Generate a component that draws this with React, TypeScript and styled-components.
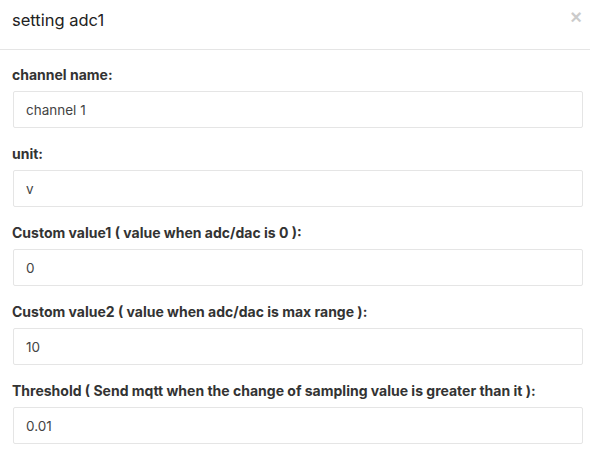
import styled, { createGlobalStyle } from "styled-components";

const GlobalStyle = createGlobalStyle`
  html, body {
    margin: 0;
    padding: 0;
    background: #ffffff;
  }
  body {
    font-family: Inter, "Helvetica Neue", Arial, sans-serif;
    color: #333333;
  }
`;

const Modal = styled.div`
  width: 590px;
  height: 470px;
  background: #fff;
  overflow: hidden;
`;

const Header = styled.div`
  display: flex;
  align-items: center;
  justify-content: space-between;
  height: 49px;
  padding: 0 8px 0 12px;
  border-bottom: 1px solid #e5e5e5;
`;

const Title = styled.h4`
  margin: -9px 0 0;
  font-size: 16.5px;
  font-weight: 400;
  color: #222;
`;

const Close = styled.button`
  border: none;
  background: none;
  padding: 0;
  margin-top: -15px;
  font-family: "Liberation Sans", Arial, sans-serif;
  font-size: 20px;
  font-weight: 700;
  line-height: 1;
  color: #000;
  opacity: 0.2;
  cursor: pointer;
`;

const Body = styled.div`
  padding: 16px 7px 0 13px;
  display: flex;
  flex-direction: column;
`;

const Group = styled.div`
  display: flex;
  flex-direction: column;
  margin-bottom: 17px;
`;

const Label = styled.label`
  font-size: 14px;
  font-weight: 700;
  color: #333;
  line-height: 18px;
  margin-bottom: 7px;
  margin-left: -1px;
`;

const Input = styled.input`
  box-sizing: border-box;
  height: 37px;
  width: 100%;
  padding: 0 12px;
  border: 1px solid #e5e5e5;
  border-radius: 2px;
  font-family: Inter, "Helvetica Neue", Arial, sans-serif;
  font-size: 13.5px;
  color: #444;
  background: #fff;
  outline: none;
`;

const fields = [
  { label: "channel name:", value: "channel 1" },
  { label: "unit:", value: "v" },
  { label: "Custom value1 ( value when adc/dac is 0 ):", value: "0" },
  { label: "Custom value2 ( value when adc/dac is max range ):", value: "10" },
  {
    label:
      "Threshold ( Send mqtt when the change of sampling value is greater than it ):",
    value: "0.01",
  },
];

export default function App() {
  return (
    <Modal>
      <GlobalStyle />
      <Header>
        <Title>setting adc1</Title>
        <Close aria-label="Close">×</Close>
      </Header>
      <Body>
        {fields.map((f) => (
          <Group key={f.label}>
            <Label>{f.label}</Label>
            <Input defaultValue={f.value} />
          </Group>
        ))}
      </Body>
    </Modal>
  );
}
